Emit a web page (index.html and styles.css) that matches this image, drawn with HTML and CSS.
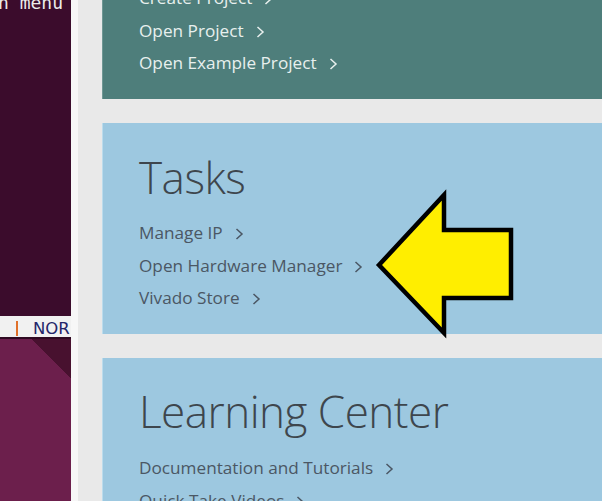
FILE: index.html
```html
<!DOCTYPE html>
<html>
<head>
<meta charset="utf-8">
<link rel="stylesheet" href="styles.css">
</head>
<body>
<div class="screen">
  <div class="terminal">
    <div class="term-top"><div class="term-line">n menu</div></div>
    <div class="statusbar"><span class="cursor"></span><span class="mode">NOR</span></div>
    <div class="term-bottom"></div>
  </div>
  <div class="strip"></div>
  <div class="welcome">
    <section class="panel panel-teal">
      <ul class="links links-top">
        <li>Create Project<svg class="chev" viewBox="0 0 9 12" width="9" height="12"><path d="M1.5 1 L7 6 L1.5 11"/></svg></li>
        <li>Open Project<svg class="chev" viewBox="0 0 9 12" width="9" height="12"><path d="M1.5 1 L7 6 L1.5 11"/></svg></li>
        <li>Open Example Project<svg class="chev" viewBox="0 0 9 12" width="9" height="12"><path d="M1.5 1 L7 6 L1.5 11"/></svg></li>
      </ul>
    </section>
    <section class="panel panel-blue">
      <h2 class="heading">Tasks</h2>
      <ul class="links">
        <li>Manage IP<svg class="chev" viewBox="0 0 9 12" width="9" height="12"><path d="M1.5 1 L7 6 L1.5 11"/></svg></li>
        <li>Open Hardware Manager<svg class="chev" viewBox="0 0 9 12" width="9" height="12"><path d="M1.5 1 L7 6 L1.5 11"/></svg></li>
        <li>Vivado Store<svg class="chev" viewBox="0 0 9 12" width="9" height="12"><path d="M1.5 1 L7 6 L1.5 11"/></svg></li>
      </ul>
    </section>
    <section class="panel panel-blue panel-last">
      <h2 class="heading">Learning Center</h2>
      <ul class="links">
        <li>Documentation and Tutorials<svg class="chev" viewBox="0 0 9 12" width="9" height="12"><path d="M1.5 1 L7 6 L1.5 11"/></svg></li>
        <li>Quick Take Videos<svg class="chev" viewBox="0 0 9 12" width="9" height="12"><path d="M1.5 1 L7 6 L1.5 11"/></svg></li>
      </ul>
    </section>
  </div>
  <svg class="arrow" viewBox="0 0 602 501" width="602" height="501">
    <polygon points="379,265 444,195 444,230 511,230 511,298 444,298 444,333" />
  </svg>
</div>
</body>
</html>
```

FILE: styles.css
```css
html, body {
  margin: 0;
  padding: 0;
}
body {
  width: 602px;
  height: 501px;
  overflow: hidden;
  background: #e9e9e9;
}
.screen {
  position: relative;
  display: flex;
  width: 602px;
  height: 501px;
  overflow: hidden;
}
.terminal {
  width: 71px;
  flex: none;
  display: flex;
  flex-direction: column;
  overflow: hidden;
}
.term-top {
  height: 316px;
  background: #3b0c2c;
  overflow: hidden;
}
.term-line {
  font-family: "DejaVu Sans Mono", monospace;
  font-size: 18px;
  line-height: 16px;
  margin-top: -5px;
  margin-left: -2px;
  color: #ecebea;
  white-space: nowrap;
}
.statusbar {
  height: 21px;
  background: #f1f1f1;
  border-bottom: 2px solid #2f0a22;
  display: flex;
  align-items: center;
  white-space: nowrap;
}
.cursor {
  width: 2px;
  height: 15px;
  background: #e0702a;
  margin-left: 16px;
  margin-top: 3px;
  flex: none;
}
.mode {
  font-family: "DejaVu Sans", sans-serif;
  font-size: 16.5px;
  color: #25266a;
  margin-left: 15px;
  line-height: 21px;
  margin-top: 3px;
}
.term-bottom {
  flex: 1;
  background: linear-gradient(225deg, #48112f 0 28px, transparent 28px), #6c1f4c;
}
.strip {
  width: 7px;
  flex: none;
  background: #f7f7f7;
}
.welcome {
  flex: 1;
  padding-left: 24px;
  display: flex;
  flex-direction: column;
  gap: 24px;
  font-family: "Open Sans", sans-serif;
}
.panel {
  border-left: 1px solid #bcdcec;
  padding: 26.5px 0 19.35px 36px;
}
.panel-teal {
  background: #4e7e7b;
  color: #e8f0ee;
  border-left-color: #6f9794;
  padding-top: 0;
}
.panel-blue {
  background: #9dc8e0;
  color: #4b5764;
}
.panel-last {
  flex: 1;
}
.heading {
  margin: 0;
  font-family: "Open Sans", sans-serif;
  font-weight: 300;
  font-size: 44px;
  letter-spacing: -0.5px;
  line-height: 54px;
  color: #3e464d;
}
.links {
  list-style: none;
  margin: 13.65px 0 0;
  padding: 0;
  font-size: 17.2px;
  line-height: 32.5px;
  white-space: nowrap;
}
.links-top {
  margin-top: -17.85px;
}
.chev {
  margin-left: 12px;
  vertical-align: -1px;
  fill: none;
  stroke: currentColor;
  stroke-width: 1.5;
}
.arrow {
  position: absolute;
  left: 0;
  top: 0;
}
.arrow polygon {
  fill: #ffee00;
  stroke: #000;
  stroke-width: 4.5;
  stroke-linejoin: miter;
}
```
